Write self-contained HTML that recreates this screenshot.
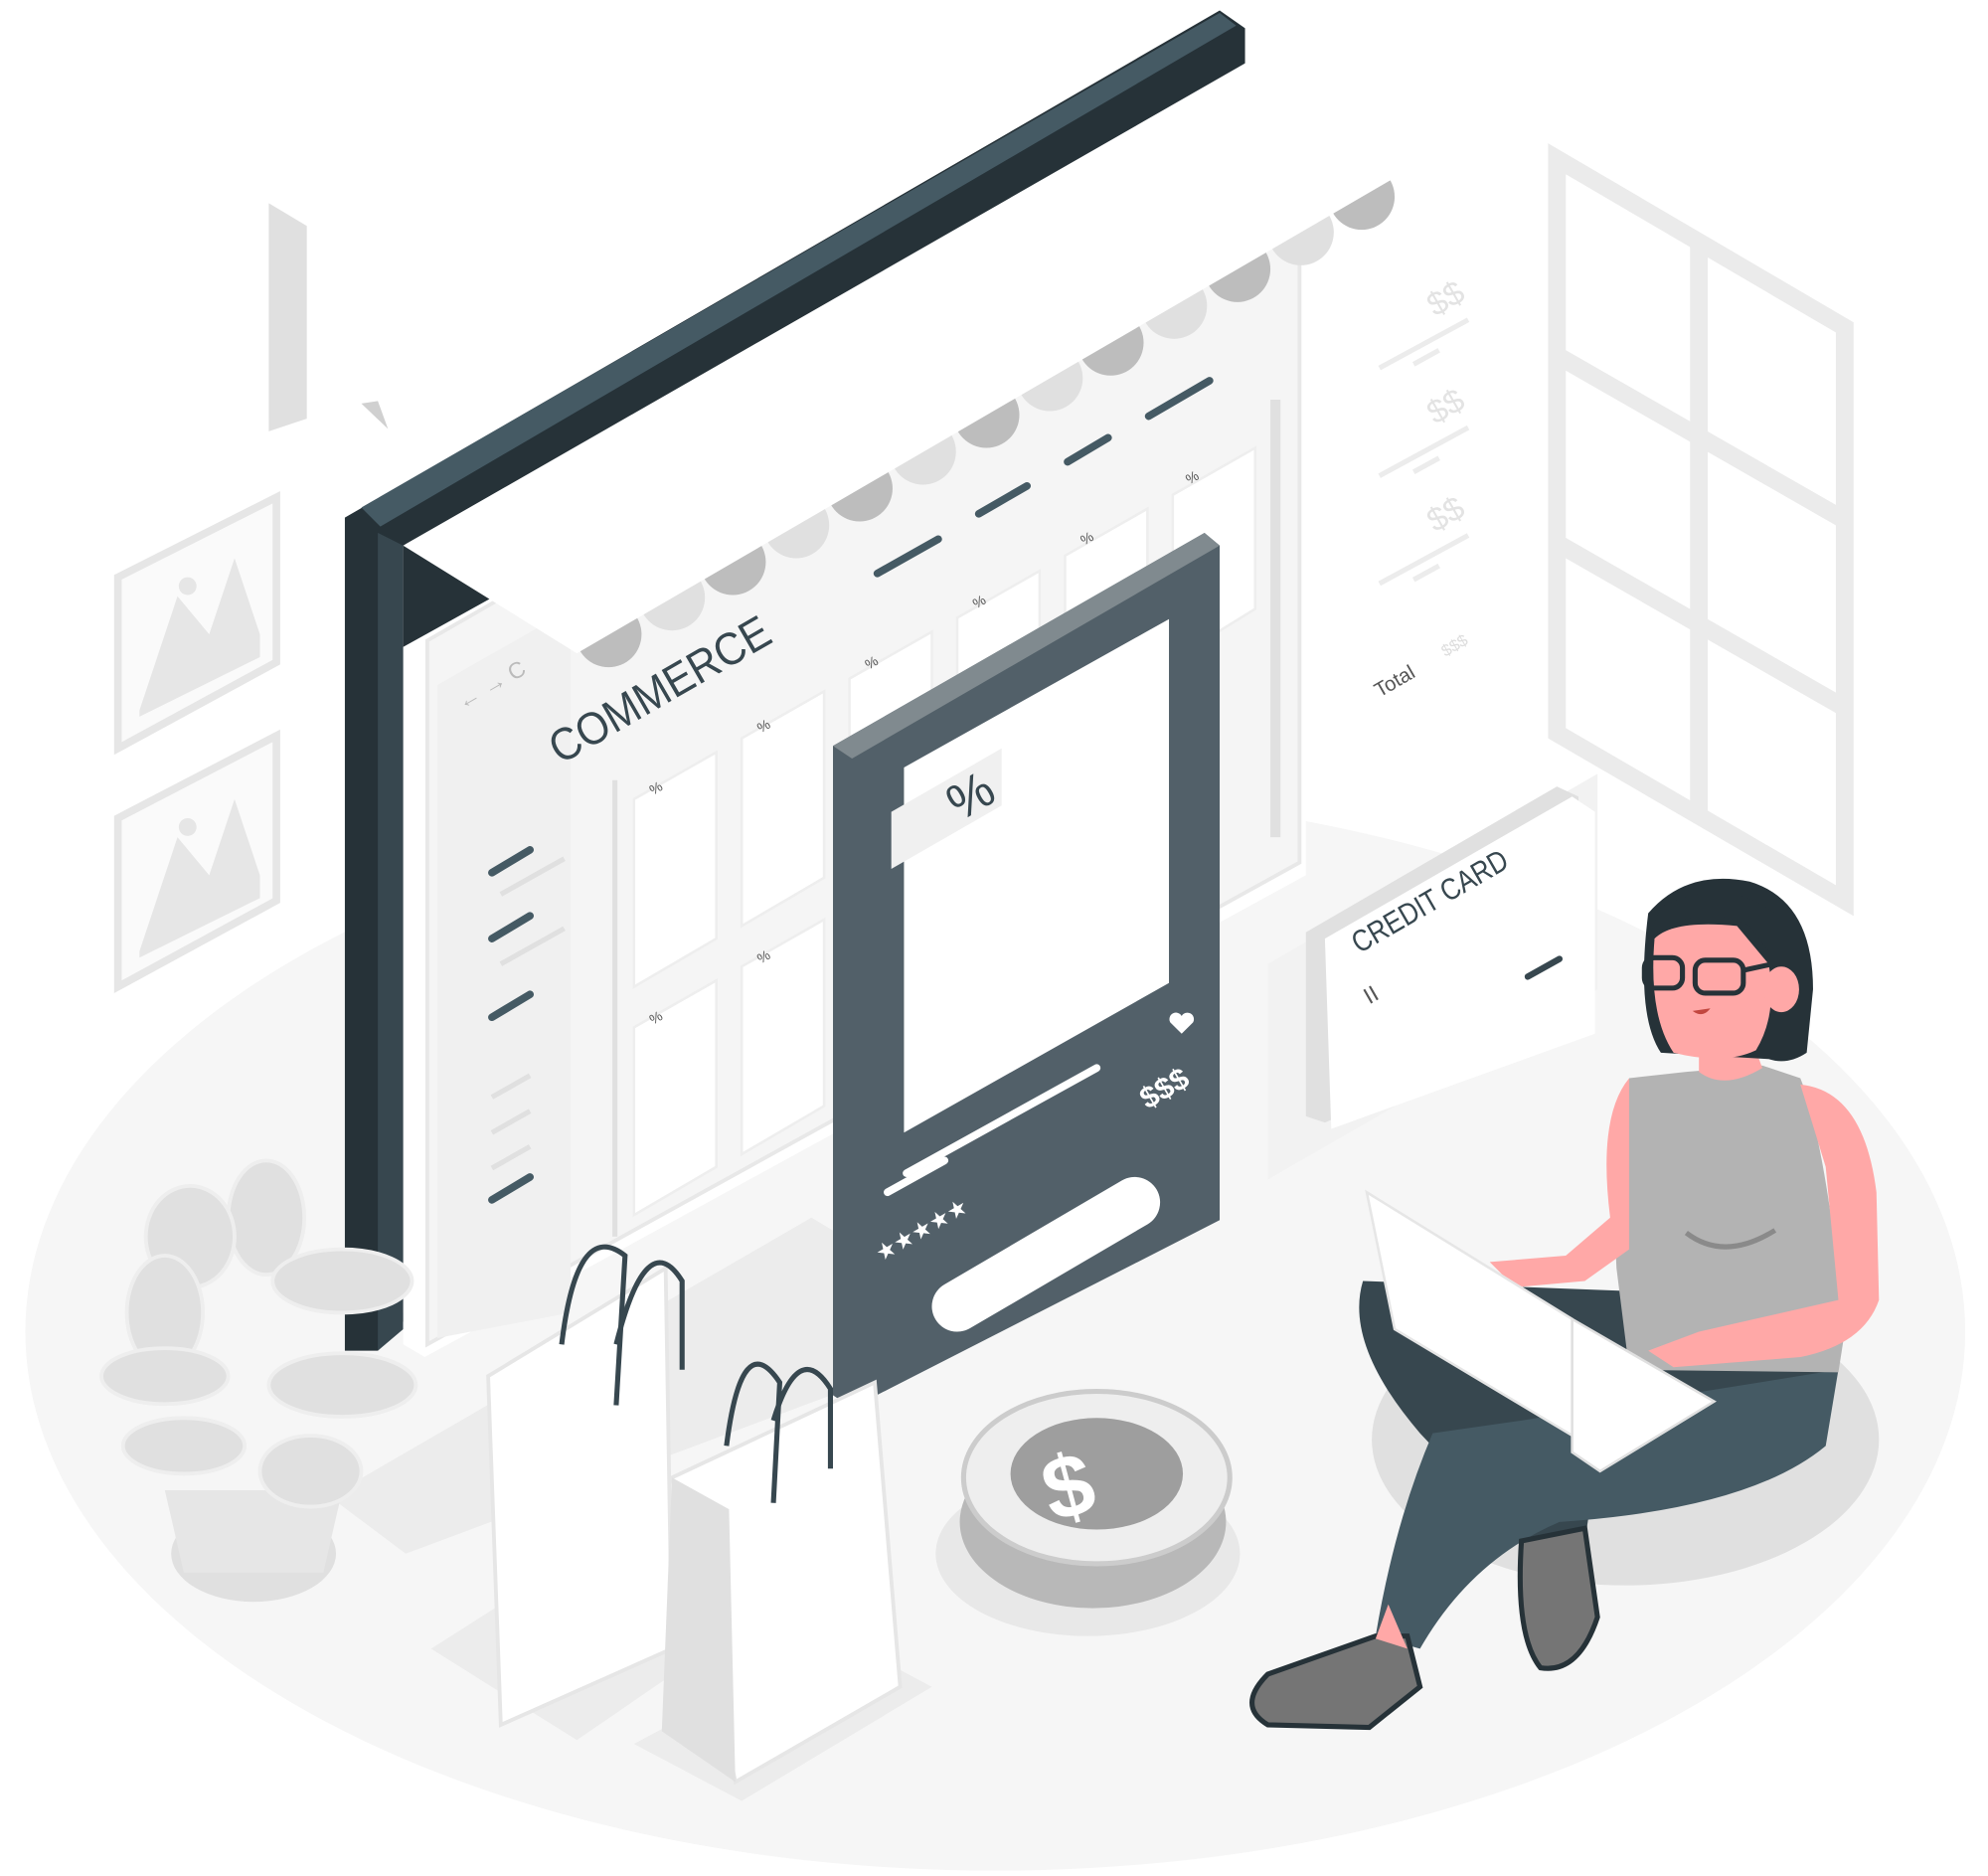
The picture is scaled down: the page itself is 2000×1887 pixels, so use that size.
<!DOCTYPE html>
<html><head><meta charset="utf-8"><style>
html,body{margin:0;padding:0;background:#fff;width:2000px;height:1887px;overflow:hidden}
svg{display:block}
text{font-family:"Liberation Sans",sans-serif}
</style></head><body>
<svg width="2000" height="1887" viewBox="0 0 1568 1479" xmlns="http://www.w3.org/2000/svg">
<ellipse cx="785" cy="1050" rx="765" ry="425" fill="#f6f6f6"/>
<g fill="none" stroke="#ebebeb" stroke-width="14">
<polygon points="1228,125 1455,258 1455,710 1228,578"/>
<line x1="1340" y1="190" x2="1340" y2="645"/>
<line x1="1228" y1="280" x2="1455" y2="410"/>
<line x1="1228" y1="428" x2="1455" y2="558"/>
</g>
<path d="M212,160 L242,178 L242,330 L212,340 Z" fill="#e0e0e0"/>
<path d="M285,318 L298,316 L306,338 Z" fill="#d0d0d0"/>
<g fill="#fafafa" stroke="#e6e6e6" stroke-width="6">
<polygon points="93,455 218,392 218,522 93,590"/>
<polygon points="93,645 218,580 218,710 93,778"/>
</g>
<g fill="#e6e6e6">
<polygon points="110,560 140,470 165,500 185,440 205,500 205,518 110,565"/>
<polygon points="110,750 140,660 165,690 185,630 205,690 205,708 110,755"/>
<circle cx="148" cy="462" r="7"/><circle cx="148" cy="652" r="7"/>
</g>
<g fill="none" stroke="#ececec" stroke-width="4">
<line x1="1088" y1="290" x2="1158" y2="252"/><line x1="1115" y1="287" x2="1135" y2="276"/>
<line x1="1088" y1="375" x2="1158" y2="337"/><line x1="1115" y1="372" x2="1135" y2="361"/>
<line x1="1088" y1="460" x2="1158" y2="422"/><line x1="1115" y1="457" x2="1135" y2="446"/>
</g>
<g fill="#e3e3e3" font-size="26">
<text transform="translate(1132,250) rotate(-30)">$$</text>
<text transform="translate(1132,335) rotate(-30)">$$</text>
<text transform="translate(1132,420) rotate(-30)">$$</text>
</g>
<text transform="translate(1088,550) rotate(-30)" font-size="16" fill="#555">Total</text>
<text transform="translate(1140,518) rotate(-30)" font-size="13" fill="#ddd">$$$</text>
<polygon points="260,1180 640,960 790,1050 320,1225" fill="#ececec"/>
<polygon points="272,408 962,8 982,22 982,60 320,440 320,1040 298,1065 272,1065" fill="#263238"/>
<polygon points="285,400 962,10 975,20 300,415" fill="#455a64"/>
<polygon points="298,420 318,430 318,1048 298,1065" fill="#37474f"/>
<polygon points="318,430 985,48 1030,200 1030,690 335,1070 318,1060" fill="#fff"/>
<polygon points="318,428 390,470 318,510" fill="#263238"/>
<polygon points="337,505 1025,110 1025,680 337,1060" fill="#f5f5f5" stroke="#e8e8e8" stroke-width="3"/>
<polygon points="345,540 450,480 450,1035 345,1055" fill="#f0f0f0"/>
<g fill="#fff" stroke="#eee" stroke-width="2">
<polygon points="500,630 565,593 565,740 500,778"/>
<polygon points="585,582 650,545 650,692 585,730"/>
<polygon points="500,810 565,773 565,920 500,958"/>
<polygon points="585,762 650,725 650,872 585,910"/>
<polygon points="670,535 735,498 735,560 670,590"/>
<polygon points="755,487 820,450 820,560 755,590"/>
<polygon points="840,438 905,401 905,520 840,560"/>
<polygon points="925,390 990,353 990,480 925,520"/>
</g>
<g stroke="#455a64" stroke-width="6" stroke-linecap="round">
<line x1="388" y1="688" x2="418" y2="670"/>
<line x1="388" y1="740" x2="418" y2="722"/>
<line x1="388" y1="802" x2="418" y2="784"/>
<line x1="388" y1="946" x2="418" y2="928"/>
<line x1="692" y1="452" x2="740" y2="425"/>
<line x1="772" y1="405" x2="810" y2="383"/>
<line x1="842" y1="364" x2="874" y2="345"/>
<line x1="906" y1="328" x2="954" y2="300"/>
</g>
<g stroke="#e0e0e0" stroke-width="4">
<line x1="395" y1="705" x2="445" y2="677"/><line x1="395" y1="760" x2="445" y2="732"/>
<line x1="388" y1="865" x2="418" y2="848"/><line x1="388" y1="893" x2="418" y2="876"/><line x1="388" y1="921" x2="418" y2="904"/>
<line x1="485" y1="615" x2="485" y2="975"/>
<line x1="1006" y1="315" x2="1006" y2="660" stroke-width="8"/>
</g>
<g fill="#555" font-size="11">
<text transform="translate(515,627) rotate(-30)">%</text><text transform="translate(600,578) rotate(-30)">%</text>
<text transform="translate(685,528) rotate(-30)">%</text><text transform="translate(770,480) rotate(-30)">%</text>
<text transform="translate(855,430) rotate(-30)">%</text><text transform="translate(938,382) rotate(-30)">%</text>
<text transform="translate(515,808) rotate(-30)">%</text><text transform="translate(600,760) rotate(-30)">%</text>
</g>
<text transform="translate(365,560) rotate(-30)" font-size="18" fill="#bbb">← → C</text>
<g>
<circle cx="480" cy="500" r="26" fill="#bdbdbd"/><circle cx="530" cy="471" r="26" fill="#e0e0e0"/>
<circle cx="578" cy="443" r="26" fill="#bdbdbd"/><circle cx="628" cy="414" r="26" fill="#e0e0e0"/>
<circle cx="678" cy="385" r="26" fill="#bdbdbd"/><circle cx="728" cy="356" r="26" fill="#e0e0e0"/>
<circle cx="778" cy="327" r="26" fill="#bdbdbd"/><circle cx="828" cy="298" r="26" fill="#e0e0e0"/>
<circle cx="876" cy="270" r="26" fill="#bdbdbd"/><circle cx="926" cy="241" r="26" fill="#e0e0e0"/>
<circle cx="976" cy="212" r="26" fill="#bdbdbd"/><circle cx="1026" cy="183" r="26" fill="#e0e0e0"/>
<circle cx="1074" cy="155" r="26" fill="#bdbdbd"/>
</g>
<polygon points="318,430 985,50 1100,140 455,515" fill="#fff"/>
<text transform="translate(442,603) rotate(-30)" font-size="36" fill="#37474f" textLength="195" lengthAdjust="spacingAndGlyphs">COMMERCE</text>
<polygon points="657,588 950,420 962,430 962,962 672,1110 657,1100" fill="#526069"/>
<polygon points="657,588 950,420 962,430 672,598" fill="#808a8f"/>
<polygon points="713,605 922,488 922,775 713,893" fill="#fff"/>
<polygon points="703,640 790,590 790,635 703,685" fill="#f0f0f0"/>
<text transform="translate(757,648) rotate(-30)" font-size="40" fill="#37474f">%</text>
<line x1="715" y1="925" x2="865" y2="842" stroke="#fff" stroke-width="6" stroke-linecap="round"/>
<line x1="700" y1="940" x2="745" y2="915" stroke="#fff" stroke-width="6" stroke-linecap="round"/>
<text transform="translate(905,875) rotate(-30)" font-size="24" font-weight="bold" fill="#fff">$$$</text>
<text transform="translate(695,995) rotate(-30)" font-size="18" fill="#fff">★★★★★</text>
<path d="M932,815 l-9,-9 a5,5 0 0 1 9,-5 a5,5 0 0 1 9,5 z" fill="#fff"/>
<line x1="755" y1="1030" x2="895" y2="948" stroke="#fff" stroke-width="40" stroke-linecap="round"/>
<ellipse cx="858" cy="1225" rx="120" ry="65" fill="#e8e8e8"/>
<ellipse cx="862" cy="1200" rx="105" ry="68" fill="#b8b8b8"/>
<ellipse cx="865" cy="1165" rx="105" ry="68" fill="#eee" stroke="#ccc" stroke-width="4"/>
<ellipse cx="865" cy="1162" rx="68" ry="44" fill="#9e9e9e"/>
<text x="822" y="1190" font-size="70" font-weight="bold" fill="#fff" transform="rotate(-15,865,1165)">$</text>
<polygon points="340,1300 455,1372 560,1300 450,1230" fill="#ececec"/>
<polygon points="385,1085 525,1000 530,1300 395,1360" fill="#fff" stroke="#e6e6e6" stroke-width="3"/>
<polygon points="500,1375 585,1420 735,1330 660,1290" fill="#ececec"/>
<polygon points="530,1165 690,1090 710,1330 580,1405" fill="#fff" stroke="#e6e6e6" stroke-width="3"/>
<polygon points="530,1165 575,1190 580,1405 522,1365" fill="#e0e0e0"/>
<g fill="none" stroke="#37474f" stroke-width="4">
<path d="M443,1060 Q455,960 493,990 L486,1108"/><path d="M486,1060 Q510,965 538,1010 L538,1080"/>
<path d="M573,1140 Q585,1045 615,1090 L610,1185"/><path d="M610,1120 Q630,1055 655,1095 L655,1158"/>
</g>
<ellipse cx="200" cy="1225" rx="65" ry="38" fill="#e0e0e0"/>
<polygon points="130,1175 270,1175 255,1240 145,1240" fill="#e6e6e6"/>
<g fill="#e0e0e0" stroke="#eee" stroke-width="3">
<ellipse cx="210" cy="960" rx="30" ry="45"/><ellipse cx="150" cy="975" rx="35" ry="40"/>
<ellipse cx="130" cy="1035" rx="30" ry="45"/><ellipse cx="270" cy="1010" rx="55" ry="25"/>
<ellipse cx="130" cy="1085" rx="50" ry="22"/><ellipse cx="270" cy="1092" rx="58" ry="25"/>
<ellipse cx="145" cy="1140" rx="48" ry="22"/><ellipse cx="245" cy="1160" rx="40" ry="28"/>
</g>
<polygon points="1000,760 1260,610 1260,780 1000,930" fill="#f2f2f2"/>
<polygon points="1030,735 1228,620 1245,628 1245,800 1045,885 1030,880" fill="#e0e0e0"/>
<polygon points="1045,740 1240,628 1258,640 1258,815 1050,890" fill="#fff"/>
<text transform="translate(1072,752) rotate(-30)" font-size="24" fill="#37474f" textLength="138" lengthAdjust="spacingAndGlyphs">CREDIT CARD</text>
<line x1="1205" y1="770" x2="1230" y2="756" stroke="#37474f" stroke-width="5" stroke-linecap="round"/>
<text transform="translate(1080,792) rotate(-30)" font-size="18" fill="#555">II</text>
<ellipse cx="1282" cy="1135" rx="200" ry="115" fill="#e0e0e0"/>
<path d="M1075,1010 Q1060,1060 1120,1130 L1200,1215 L1210,1235 L1250,1215 L1260,1150 L1380,1150 Q1450,1120 1450,1070 L1340,1020 Z" fill="#37474f"/>
<path d="M1130,1130 Q1100,1200 1085,1290 L1120,1300 Q1160,1230 1230,1200 Q1380,1190 1440,1140 L1450,1080 L1200,1120 Z" fill="#455a64"/>
<path d="M1085,1290 L1000,1320 Q975,1345 1000,1360 L1080,1362 L1120,1330 L1110,1290 Z" fill="#757575" stroke="#263238" stroke-width="4"/>
<path d="M1200,1215 Q1195,1290 1215,1315 Q1245,1320 1260,1275 L1250,1205 Z" fill="#757575" stroke="#263238" stroke-width="4"/>
<path d="M1095,1265 L1085,1292 L1110,1300 Z" fill="#ffa8a7"/>
<path d="M1285,850 Q1270,900 1275,1000 L1285,1080 L1450,1082 L1455,1050 Q1440,900 1420,850 L1390,840 L1330,845 Z" fill="#b3b3b3"/>
<path d="M1420,855 Q1470,860 1480,940 L1482,1025 Q1470,1060 1420,1070 L1320,1078 L1300,1065 L1340,1050 L1450,1025 L1440,920 Z" fill="#ffa8a7"/>
<path d="M1285,850 Q1260,880 1270,960 L1235,990 L1175,995 L1195,1015 L1250,1010 L1285,985 Z" fill="#ffa8a7"/>
<path d="M1340,845 L1340,815 L1380,815 L1390,842 Q1360,860 1340,845 Z" fill="#ffa8a7"/>
<path d="M1330,972 Q1360,995 1400,970" fill="none" stroke="#8a8a8a" stroke-width="4"/>
<polygon points="1078,940 1240,1040 1262,1145 1100,1048" fill="#fff" stroke="#e6e6e6" stroke-width="2"/>
<polygon points="1240,1040 1352,1105 1262,1160 1240,1145" fill="#fff" stroke="#e0e0e0" stroke-width="2"/>
<path d="M1300,720 Q1330,685 1380,695 Q1430,710 1430,780 L1425,830 Q1410,840 1395,835 L1310,830 Q1290,800 1300,720 Z" fill="#263238"/>
<path d="M1305,740 Q1320,725 1370,730 L1395,760 Q1402,800 1385,828 Q1360,840 1320,830 Q1300,800 1305,740 Z" fill="#ffa8a7"/>
<path d="M1300,740 Q1340,710 1380,730 L1395,750 L1400,720 Q1360,690 1310,715 Z" fill="#263238"/>
<ellipse cx="1405" cy="780" rx="14" ry="18" fill="#ffa8a7"/>
<g fill="none" stroke="#263238" stroke-width="4">
<rect x="1297" y="755" width="30" height="24" rx="8"/><rect x="1337" y="757" width="38" height="26" rx="8"/>
<line x1="1375" y1="765" x2="1398" y2="760"/>
</g>
<path d="M1335,797 q8,6 14,-2" fill="#c2473f"/>
</svg>
</body></html>
